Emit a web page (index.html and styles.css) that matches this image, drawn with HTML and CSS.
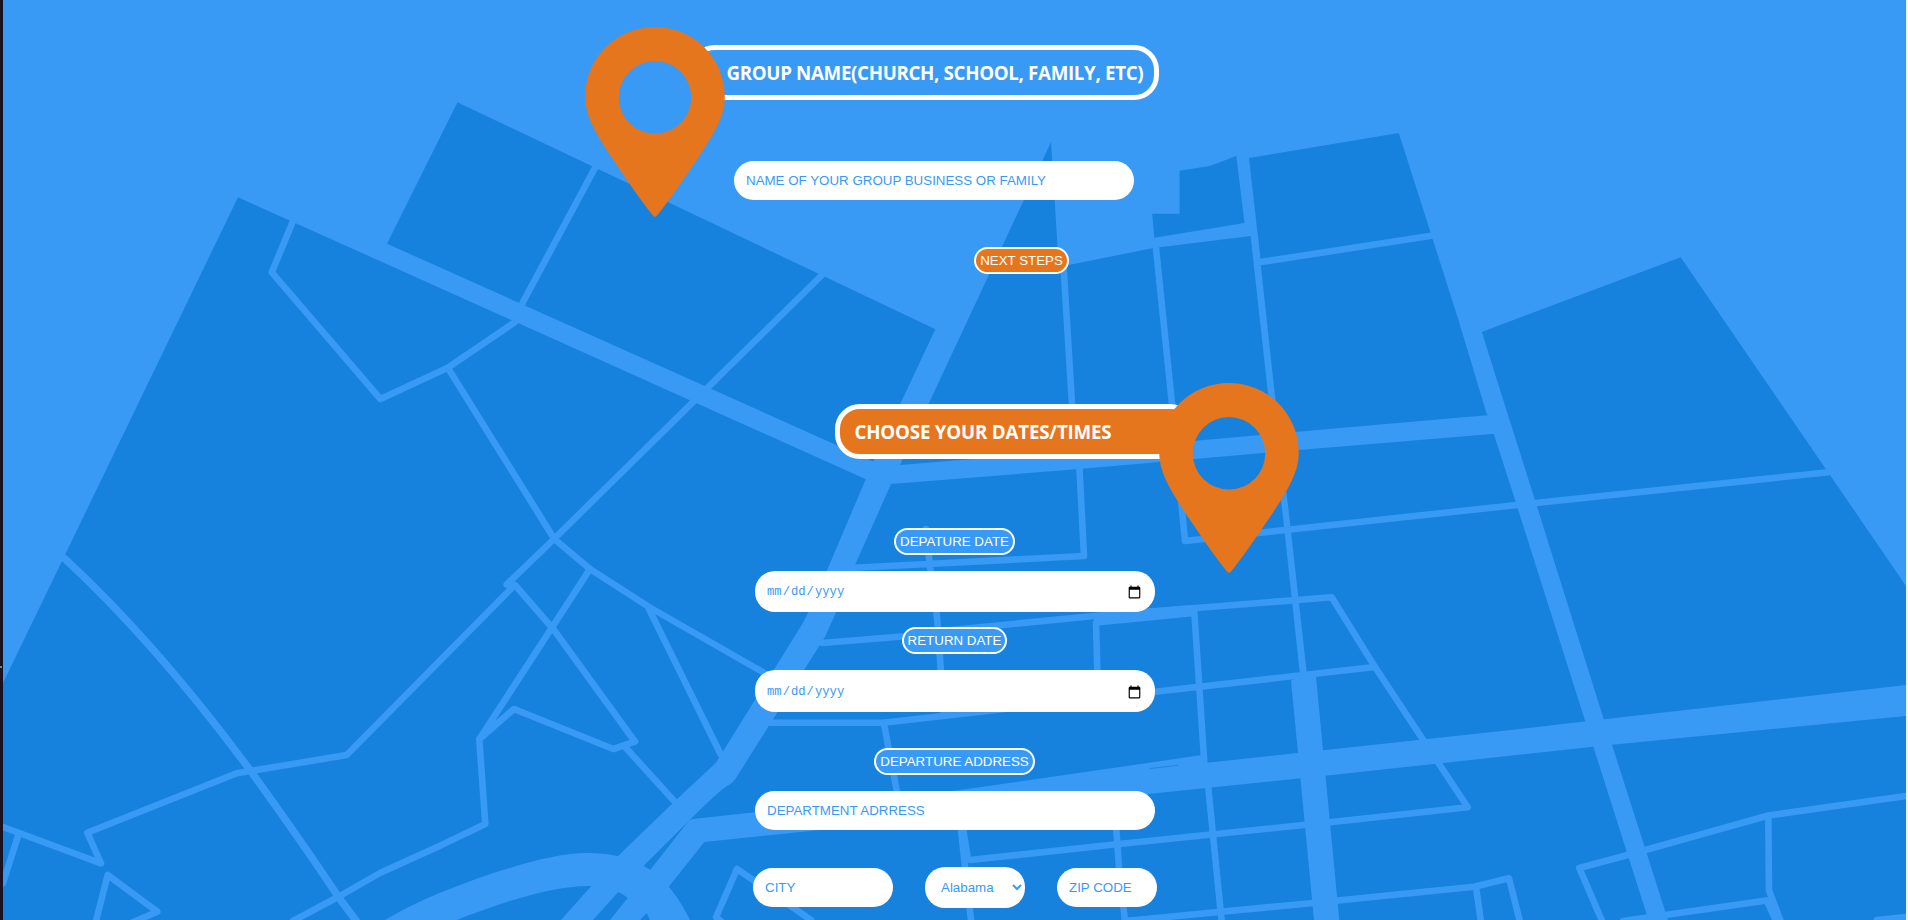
FILE: index.html
```html
<!DOCTYPE html>
<html lang="en">
<head>
<meta charset="utf-8">
<title>Group trip</title>
<link rel="stylesheet" href="styles.css">
</head>
<body>
<div class="page">
  <svg class="map" viewBox="0 0 1908 920" aria-hidden="true">
    <g class="blocks">
      <path d="M457.5 102.3L935.5 329.3L900.4 404L873.6 461.7L387 243.7Z"/>
      <path d="M3 683L238 197.3L866 479.3L900 465L1051 142L1058.8 267L1153.5 248L1251 236L1260.8 262L1249 158L1398.8 133L1460 324.7L1487 415L1500 392L1481.7 332L1680.7 257.3L1906 586V920H3Z"/>
      <path d="M1152.2 213.7H1179.6V170.7L1209.8 166L1236.3 156L1244.5 223L1154.3 237.7Z"/>
    </g>
    <g class="roads">
      <path d="M935.5 329.3L900.4 404L873.6 461.7L865.7 479.3L826.7 571Q815 600 802.3 624L716 762.7L676 800L618.3 855.7L561 920H593L620 890L642.7 866.7L691.7 818Q720 790 727 786Q733 783 736 778L825 636.7Q840 605 855 565L891 484L900 465Z"/>
      <path d="M873 461.5L900 465.1L1195.4 440.7L1340 428L1490 415L1495 433.8L1298.7 450L1076 469.3L891 484L866 479.3Z"/>
      <path d="M1460 324.7L1481.7 332L1535 500.2L1604 720L1612 744.8L1668 920H1648.5L1593 745.7L1515.7 502L1487.7 415Z"/>
      <path d="M1906 685L1584.3 721.4L1520 729L1207.7 762.7L1207 757L1201.7 755L1180 758.3L953 791L755 812.3L693 819Q690 819 687 823L649.3 871L610 920H640L668.7 886.7L704.3 842L820 830L1148 794L1325 775.7L1612 744.8L1906 716Z"/>
      <path d="M1250.6 236L1267.3 387L1283.3 520L1300 675L1291 680.7L1298 753L1314 920H1339.3L1323 750L1316 676.7L1306.7 672L1289.7 520L1274 387L1260.8 265L1257.6 234Z"/>
      <path d="M385 920Q410 905 440 892.7C500 869 555 852 590 853C640 854 668 875 690 920H650L646.7 913L640 920H634C643 905 622 887 591.7 886C553 885 500 903 456.7 920Z"/>
      <path d="M1094 613L1192 605V616.500L1094 626Z"/>
      <path d="M958.5 830H966.5L971 857L967 863Z"/>
    </g>
    <path class="seam" d="M1150 768.5L1178 765.3"/>
    <g class="streets">
      <path d="M293 221L271.800 272.3L380.4 399L447.800 367.7L515 322L523 302L596 166"/>
      <path d="M447.8 367.7L554.3 539L590 569L649 607L768 675"/>
      <path d="M823 274L554 539L506.7 584.5L515 585L554 630L635 741.7L613.3 749L514 709L479.3 739.3L590 569"/>
      <path d="M479.3 739.3L485.3 824L440 845.7L380 873L338 897L293 921"/>
      <path d="M513 586.7L346.7 755L236.7 773.3L87.3 832.7L101 863.3L3 827M18.3 835L3 883"/>
      <path d="M131 923L157.3 911.7L107.7 875L96 921"/>
      <path d="M649 609L721 755M626 748L675 802"/>
      <path d="M811 920L737 869L716 917.3L722 922"/>
      <path d="M1063 258L1072 404V462M1156 248L1172 404L1185 541L1290 529.5L1526 504L1828 472.3"/>
      <path d="M1258 262.5L1433 235.5"/>
      <path d="M1079.500 469L1084 556L850 568M926 529L930 567L937 617L944 714"/>
      <path d="M822 643L902 636.5M936 631.5L1094 616L1331.7 597.3L1375 667L1467.7 807.3L1330 822.3L1116.7 844.3L970 860"/>
      <path d="M1096 623L1098 695M1194.3 611.7L1204 758"/>
      <path d="M770 722.7H883L943 716L1155 691.7L1375 667M884 724L897 792"/>
      <path d="M961 830L965 866.7L971 920M1116 825L1119 868L1125 921L1313 903L1474 886.7L1509 878.3L1520 922"/>
      <path d="M1476 887L1481 922M1208 785L1213 835L1221.7 922"/>
      <path d="M1601.7 920L1579.3 868L1627.7 855L1768.3 815.5L1906 796M1768.3 815.5L1769 890.5L1781 922M1623 921L1766.7 900.5L1776 921M1877 920L1906 917"/>
      <path class="wide" d="M64.3 558.3Q155 642 250 770Q302 842 338.3 896.7L357 922"/>
    </g>
    <path class="edge" d="M0 0H3V920H0Z"/>
    <path class="tick" d="M0 666H2V668H0Z"/>
    <path class="gutter" d="M1906 0H1908V920H1906Z"/>
  </svg>

  <form class="form">
    <section class="group">
      <div class="title title-group"><h3>GROUP NAME(CHURCH, SCHOOL, FAMILY, ETC)</h3>
        <svg class="pin pin-left" viewBox="0 0 140 190"><path fill-rule="evenodd" d="M70 0C108.600 0 139.800 31 139.800 69.500C139.800 90 128 108 113 131C100 150 84 174 72 188.500Q70 191 68 188.500C56 174 40 150 27 131C12 108 .2 90 .2 69.500C.2 31 31.400 0 70 0ZM70 34A36.300 36.300 0 1 0 70 106.600A36.300 36.300 0 1 0 70 34Z"/></svg>
      </div>
      <input class="field field-wide" type="text" placeholder="NAME OF YOUR GROUP BUSINESS OR FAMILY">
      <button class="tag tag-next" type="button">NEXT STEPS</button>
    </section>

    <section class="dates">
      <div class="title title-dates"><h3>CHOOSE YOUR DATES/TIMES</h3>
        <svg class="pin pin-right" viewBox="0 0 140 190"><path fill-rule="evenodd" d="M70 0C108.600 0 139.800 31 139.800 69.500C139.800 90 128 108 113 131C100 150 84 174 72 188.500Q70 191 68 188.500C56 174 40 150 27 131C12 108 .2 90 .2 69.500C.2 31 31.400 0 70 0ZM70 34A36.300 36.300 0 1 0 70 106.600A36.300 36.300 0 1 0 70 34Z"/></svg>
      </div>
      <span class="tag tag-departure">DEPATURE DATE</span>
      <input class="field field-date" type="date">
      <span class="tag tag-return">RETURN DATE</span>
      <input class="field field-date" type="date">
      <span class="tag tag-address">DEPARTURE ADDRESS</span>
      <input class="field field-wide field-address" type="text" placeholder="DEPARTMENT ADRRESS">
      <div class="place">
        <input class="field field-city" type="text" placeholder="CITY">
        <select class="field field-state"><option>Alabama</option></select>
        <input class="field field-zip" type="text" placeholder="ZIP CODE">
      </div>
    </section>
  </form>
</div>
</body>
</html>
```
FILE: styles.css
```css
* { box-sizing: border-box; }
html, body { margin: 0; height: 920px; overflow: hidden; }
body { font-family: "Liberation Sans", Arial, sans-serif; }
.page { position: relative; width: 1908px; height: 920px; overflow: hidden; background: #389af4; }
.map { position: absolute; left: 0; top: 0; width: 1908px; height: 920px; }
.blocks { fill: #1682de; }
.roads { fill: #389af4; }
.seam { stroke: #1682de; stroke-width: 0.8; }
.streets { fill: none; stroke: #389af4; stroke-width: 6.6; stroke-linecap: round; stroke-linejoin: round; }
.wide { stroke-width: 7.5; }
.edge { fill: #1b1220; }
.tick { fill: #5f8f8c; }
.gutter { fill: #f1f1f1; }

.form { position: relative; display: flex; flex-direction: column; }
.group { display: flex; flex-direction: column; align-items: flex-start; padding: 45px 0 0 690px; }
.dates { display: flex; flex-direction: column; align-items: center; width: 420px; margin: 130px 0 0 745px; }

.title { position: relative; display: flex; align-items: center; height: 55px; border: 5px solid #fff; border-radius: 25px; }
.title h3 { margin: 0; color: #fff; font: 700 18.72px/25px "Open Sans", "Noto Sans", sans-serif; white-space: nowrap; }
.title-group { width: 469px; padding-left: 31.5px; background: #389af4; }
.title-dates { width: 360px; align-self: flex-start; margin-left: 90px; padding-left: 14.5px; background: #e6761e; }
.title-group h3 { letter-spacing: -0.32px; }
.title-dates h3 { letter-spacing: -0.18px; }
.pin { position: absolute; width: 140px; height: 190px; fill: #e6761e; }
.pin-left { left: -110px; top: -23px; }
.pin-right { left: 319px; top: -26px; }

.field { flex: none; margin: 0; border: 0; border-radius: 20px; background: #fff; color: #389af4; font: 13.333px "Liberation Sans", Arial, sans-serif; outline: 0; }
.field::placeholder { color: #389af4; opacity: 1; }
.field-wide { width: 400px; height: 39px; padding: 0 12px; }
.group .field-wide { margin: 61px 0 0 44px; }
.field-date { width: 400px; height: 41px; padding: 1px 13px 0 11px; font: 12.2px "Liberation Mono", monospace; }
.field-date::-webkit-calendar-picker-indicator { width: 15px; height: 15px; padding: 0; }
.field-address { margin-top: 16px; }

.tag { display: flex; align-items: center; justify-content: center; height: 27px; padding: 0; border: 2px solid #fff; border-radius: 14px; background: #389af4; color: #fff; font: 13.333px/20px "Liberation Sans", Arial, sans-serif; white-space: nowrap; }
.tag-next { width: 95px; margin: 47px 0 0 284px; background: #e6761e; }
.tag-departure { width: 121px; margin: 69px 1px 16px 0; }
.tag-return { width: 105px; margin: 15px 1px 16px 0; }
.tag-return + .field-date { height: 42px; padding-top: 2px; }
.tag-address { width: 161px; margin: 36px 1px 0 0; }
.place { display: flex; align-items: center; justify-content: space-between; width: 404px; margin-top: 37px; }
.field-city { width: 140px; height: 39px; padding: 0 12px; }
.field-state { width: 100px; height: 41px; padding: 0 0 0 12px; }
.field-zip { width: 100px; height: 39px; padding: 0 12px; }
```
